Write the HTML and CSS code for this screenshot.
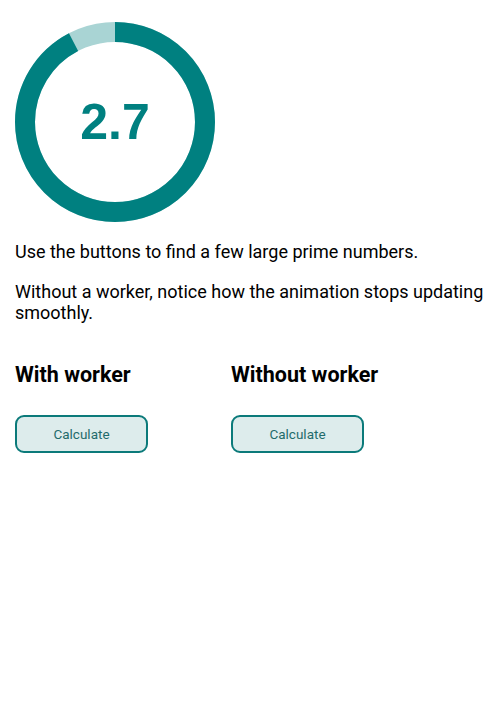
FILE: index.html
```html
<!DOCTYPE html>
<html>
<head>
<meta charset="utf-8">
<link rel="stylesheet" href="styles.css">
</head>
<body>
<div class="page">
  <div class="gauge">
    <svg class="ring" width="200" height="200" viewBox="0 0 200 200">
      <circle cx="100" cy="100" r="90" fill="none" stroke="#a9d4d4" stroke-width="20"/>
      <circle cx="100" cy="100" r="90" fill="none" stroke="#008080" stroke-width="20" stroke-dasharray="521.5 565.5" transform="rotate(-90 100 100)"/>
    </svg>
    <div class="value">2.7</div>
  </div>
  <p class="text">Use the buttons to find a few large prime numbers.</p>
  <p class="text">Without a worker, notice how the animation stops updating smoothly.</p>
  <div class="columns">
    <div class="col">
      <h2 class="heading">With worker</h2>
      <button class="btn">Calculate</button>
    </div>
    <div class="col">
      <h2 class="heading">Without worker</h2>
      <button class="btn">Calculate</button>
    </div>
  </div>
</div>
</body>
</html>
```
FILE: styles.css
```css
html, body {
  margin: 0;
  padding: 0;
  background: #ffffff;
}
body {
  font-family: Roboto, "Noto Sans", sans-serif;
  color: #000;
}
.page {
  padding: 22px 4px 0 15px;
}
.gauge {
  position: relative;
  width: 200px;
  height: 200px;
}
.ring {
  display: block;
}
.value {
  position: absolute;
  inset: 0;
  display: flex;
  align-items: center;
  justify-content: center;
  font-family: "Liberation Sans", Arial, sans-serif;
  font-weight: bold;
  font-size: 50px;
  color: #008080;
}
.text {
  font-size: 18px;
  line-height: 21px;
  margin: 19px 0 0 0;
}
.text + .text {
  margin-top: 19px;
}
.columns {
  display: grid;
  grid-template-columns: 216px 216px;
  margin-top: 39px;
}
.heading {
  font-size: 21.5px;
  font-weight: bold;
  margin: 0 0 28px 0;
  line-height: 25px;
}
.btn {
  display: block;
  width: 133px;
  height: 38px;
  border: 2px solid #0b7a7a;
  border-radius: 9px;
  background: #ddecec;
  color: #1f6b6b;
  font-family: Roboto, sans-serif;
  font-size: 13.5px;
  padding: 0;
}
```
